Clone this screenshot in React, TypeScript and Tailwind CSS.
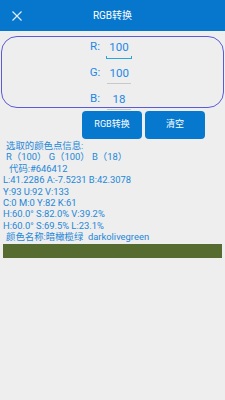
import React from "react";

const font = { fontFamily: 'Roboto, "Noto Sans CJK SC", sans-serif' };

function Row({ label, value, focused }: { label: string; value: string; focused?: boolean }) {
  return (
    <div className="flex h-[26px] items-center justify-center pr-[3px]">
      <span className="text-[11.5px] text-[#1e88e5] mr-[6px]">{label}</span>
      <span className="relative flex min-w-[26px] justify-center px-[2px] text-[11.5px] text-[#1e88e5] leading-[13px]">
        {value}
        {focused ? (
          <span className="absolute left-0 right-0 top-[15px] h-[3px] border-b-[1.5px] border-l-[1px] border-r-[1px] border-[#26a6dc]" />
        ) : (
          <span className="absolute left-[1px] right-[1px] top-[16px] h-[1px] bg-[#c9c9c9]" />
        )}
      </span>
    </div>
  );
}

export default function App() {
  return (
    <div className="w-[225px] h-[400px] bg-[#eeeeee] overflow-hidden" style={font}>
      <div className="h-[31px] bg-[#0677cd] flex items-center relative">
        <svg className="absolute left-[12px] top-[11px]" width="10" height="10" viewBox="0 0 10 10">
          <path d="M0.5 0.5 L9.5 9.5 M9.5 0.5 L0.5 9.5" stroke="#e8f1fb" strokeWidth="1.1" fill="none" />
        </svg>
        <div className="flex-1 text-center text-white text-[10px]">RGB转换</div>
      </div>
      <div className="mx-[1px] mt-[5px] h-[72px] rounded-[16px] border-[1.5px] border-[#5b5bd8] pt-[-1px] flex flex-col">
        <div className="-mt-[3px]">
          <Row label="R:" value="100" focused />
          <Row label="G:" value="100" />
          <Row label="B:" value="18" />
        </div>
      </div>
      <div className="flex justify-end gap-[3px] pr-[20px] mt-[3px]">
        <div className="w-[60px] h-[28px] rounded-[4px] bg-[#0679cf] text-white text-[9px] flex items-center justify-center">RGB转换</div>
        <div className="w-[60px] h-[28px] rounded-[4px] bg-[#0679cf] text-white text-[9px] flex items-center justify-center">清空</div>
      </div>
      <div className="mt-[1px] pl-[3px] text-[9.4px] leading-[11.4px] text-[#1c87d9]">
        <div className="pl-[3px]">选取的颜色点信息:</div>
        <div className="pl-[3px]">R（100） G（100） B（18）</div>
        <div className="pl-[6px]">代码:#646412</div>
        <div>L:41.2286 A:-7.5231 B:42.3078</div>
        <div>Y:93 U:92 V:133</div>
        <div>C:0 M:0 Y:82 K:61</div>
        <div>H:60.0° S:82.0% V:39.2%</div>
        <div>H:60.0° S:69.5% L:23.1%</div>
        <div className="pl-[3px]">颜色名称:暗橄榄绿&nbsp;&nbsp;darkolivegreen</div>
      </div>
      <div className="mx-[3px] mt-[1px] h-[14px] bg-[#556b2f]" />
    </div>
  );
}
